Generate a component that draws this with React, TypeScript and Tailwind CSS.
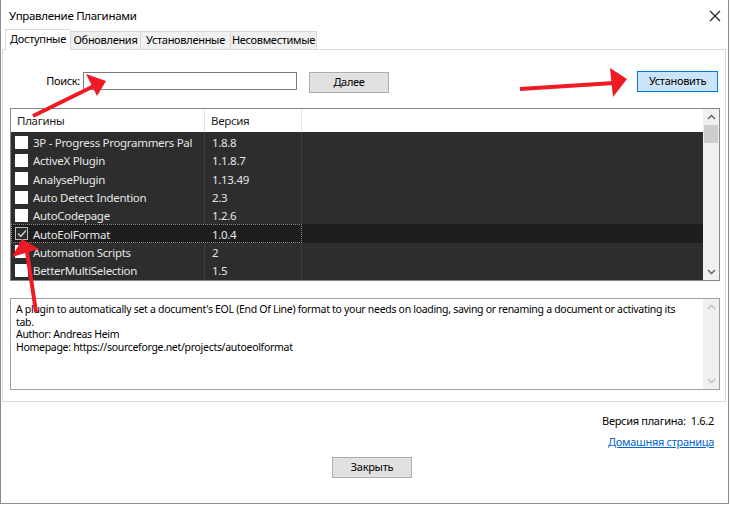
import React from "react";

const rows: [string, string][] = [
  ["3P - Progress Programmers Pal", "1.8.8"],
  ["ActiveX Plugin", "1.1.8.7"],
  ["AnalysePlugin", "1.13.49"],
  ["Auto Detect Indention", "2.3"],
  ["AutoCodepage", "1.2.6"],
  ["AutoEolFormat", "1.0.4"],
  ["Automation Scripts", "2"],
  ["BetterMultiSelection", "1.5"],
];

function Chevron({ up, color }: { up?: boolean; color: string }) {
  return (
    <svg width="9" height="6" viewBox="0 0 9 6">
      <polyline
        points={up ? "1,5 4.5,1.5 8,5" : "1,1 4.5,4.5 8,1"}
        fill="none"
        stroke={color}
        strokeWidth="1.4"
      />
    </svg>
  );
}

export default function App() {
  return (
    <div className="relative w-[730px] h-[505px] bg-white overflow-hidden font-['Noto_Sans',sans-serif] text-black tracking-[-0.3px]">
      <div className="w-[729px] h-[504px] border-x border-b border-[#8c8c8c] flex flex-col">
        {/* title bar */}
        <div className="h-[29px] flex items-center justify-between pl-[8px] pr-[6px]">
          <span className="text-[11.5px] leading-none mt-[3px]">Управление Плагинами</span>
          <svg width="12" height="12" viewBox="0 0 12 12" className="mt-[2px] mr-[1px]">
            <path d="M1 1 L11 11 M11 1 L1 11" stroke="#222" strokeWidth="1.2" />
          </svg>
        </div>
        {/* tabs */}
        <div className="relative z-10 -mb-px flex items-end h-[21px] pl-[4px] text-[11px]">
          <div className="h-[21px] w-[66px] bg-white border border-b-0 border-[#d9d9d9] flex items-center justify-center pb-[1px]">
            Доступные
          </div>
          <div className="h-[19px] w-[70px] bg-[#f0f0f0] border border-l-0 border-[#d9d9d9] flex items-center justify-center">
            Обновления
          </div>
          <div className="h-[19px] w-[90px] bg-[#f0f0f0] border border-l-0 border-[#d9d9d9] flex items-center justify-center">
            Установленные
          </div>
          <div className="h-[19px] w-[86px] bg-[#f0f0f0] border border-l-0 border-[#d9d9d9] flex items-center justify-center">
            Несовместимые
          </div>
        </div>
        {/* panel */}
        <div className="ml-px mr-[2px] h-[353px] border border-[#d9d9d9] bg-white flex flex-col">
          <div className="flex items-start pt-[21px] h-[42px] text-[11px]">
            <div className="w-[77px] text-right mt-[3px] leading-[14px]">Поиск:</div>
            <div className="ml-[3px] mt-[1px] w-[214px] h-[18px] border border-[#7a7a7a] bg-white" />
            <div className="ml-[12px] mt-[1px] w-[80px] h-[21px] border border-[#adadad] bg-[#e1e1e1] flex items-center justify-center">
              Далее
            </div>
            <div className="flex-1" />
            <div className="mr-[7px] w-[81px] h-[21px] border border-[#0078d7] bg-[#cce4f7] flex items-center justify-center">
              Установить
            </div>
          </div>
          {/* list */}
          <div className="mt-[16px] ml-[7px] mr-[5px] h-[173px] border border-[#828790] flex">
            <div className="flex-1 flex flex-col">
              <div className="h-[23px] flex bg-white text-[11.5px] text-[#1a1a1a]">
                <div className="w-[194px] border-r border-[#e5e5e5] pl-[6px] flex items-center">Плагины</div>
                <div className="w-[97px] border-r border-[#e5e5e5] pl-[6px] flex items-center">Версия</div>
              </div>
              <div className="flex-1 bg-[#2d2d2d] relative pt-px">
                <div className="absolute left-[193px] top-0 bottom-0 w-px bg-[#3c3c3c]" />
                <div className="absolute left-[290px] top-0 bottom-0 w-px bg-[#3c3c3c]" />
                {rows.map(([name, ver], i) => {
                  const sel = i === 5;
                  return (
                    <div
                      key={name}
                      className={
                        "relative h-[18.3px] flex items-center text-[11.5px] text-[#e6e6e6] " +
                        (sel ? "bg-[#1e1e1e]" : "")
                      }
                    >
                      {sel && (
                        <div className="absolute left-0 top-0 bottom-0 w-[291px] border border-dotted border-[#8a8a8a]" />
                      )}
                      <div className="w-[194px] flex items-center pl-[4px]">
                        {sel ? (
                          <div className="w-[13px] h-[13px] bg-[#2a2a2a] border border-[#bcbcbc] flex items-center justify-center">
                            <svg width="10" height="9" viewBox="0 0 10 9">
                              <path d="M1 4.5 L3.8 7.3 L9 1.5" fill="none" stroke="#c8c8c8" strokeWidth="1.5" />
                            </svg>
                          </div>
                        ) : (
                          <div className="w-[13px] h-[13px] bg-white" />
                        )}
                        <span className="ml-[5px] whitespace-nowrap mt-px">{name}</span>
                      </div>
                      <div className="pl-[7px] mt-px">{ver}</div>
                    </div>
                  );
                })}
              </div>
            </div>
            <div className="w-[16px] bg-[#f0f0f0] flex flex-col items-center">
              <div className="h-[16px] flex items-center justify-center">
                <Chevron up color="#606060" />
              </div>
              <div className="w-[14px] h-[18px] bg-[#cdcdcd]" />
              <div className="flex-1" />
              <div className="h-[17px] flex items-center justify-center">
                <Chevron color="#606060" />
              </div>
            </div>
          </div>
          {/* description */}
          <div className="mt-[17px] ml-[7px] mr-[5px] h-[92px] border border-[#a0a0a0] flex">
            <div className="flex-1 pl-[5px] pt-[4px] text-[10.5px] leading-[12.6px] tracking-[-0.3px]">
              <div className="whitespace-nowrap">
                A plugin to automatically set a document's EOL (End Of Line) format to your needs on loading, saving or renaming a document or activating its
              </div>
              <div>tab.</div>
              <div>Author: Andreas Heim</div>
              <div>Homepage: https://sourceforge.net/projects/autoeolformat</div>
            </div>
            <div className="w-[16px] bg-[#f0f0f0] flex flex-col items-center justify-between py-[5px]">
              <Chevron up color="#c0c0c0" />
              <Chevron color="#c0c0c0" />
            </div>
          </div>
        </div>
        {/* bottom */}
        <div className="flex flex-col items-end pr-[14px] text-[11px]">
          <div className="mt-[11px] leading-[16px]">Версия плагина:&nbsp;&nbsp;1.6.2</div>
          <div className="mt-[5px] leading-[16px] text-[#0066cc] underline">Домашняя страница</div>
        </div>
        <div className="flex justify-center mt-[7px] pl-[15px]">
          <div className="w-[80px] h-[21px] border border-[#adadad] bg-[#e1e1e1] flex items-center justify-center text-[11px]">
            Закрыть
          </div>
        </div>
      </div>
      {/* red arrows */}
      <svg className="absolute inset-0 pointer-events-none" width="730" height="505" viewBox="0 0 730 505">
        <g fill="#ee1b24" stroke="#ee1b24">
          <line x1="33" y1="116" x2="94" y2="86" strokeWidth="4" />
          <polygon points="86,74 106,81 97,96" stroke="none" />
          <line x1="520" y1="89" x2="614" y2="83" strokeWidth="4" />
          <polygon points="627,79 610,68 613,97" stroke="none" />
          <line x1="36" y1="312" x2="27" y2="252" strokeWidth="4" />
          <polygon points="22,239 12,257 39,249" stroke="none" />
        </g>
      </svg>
    </div>
  );
}
